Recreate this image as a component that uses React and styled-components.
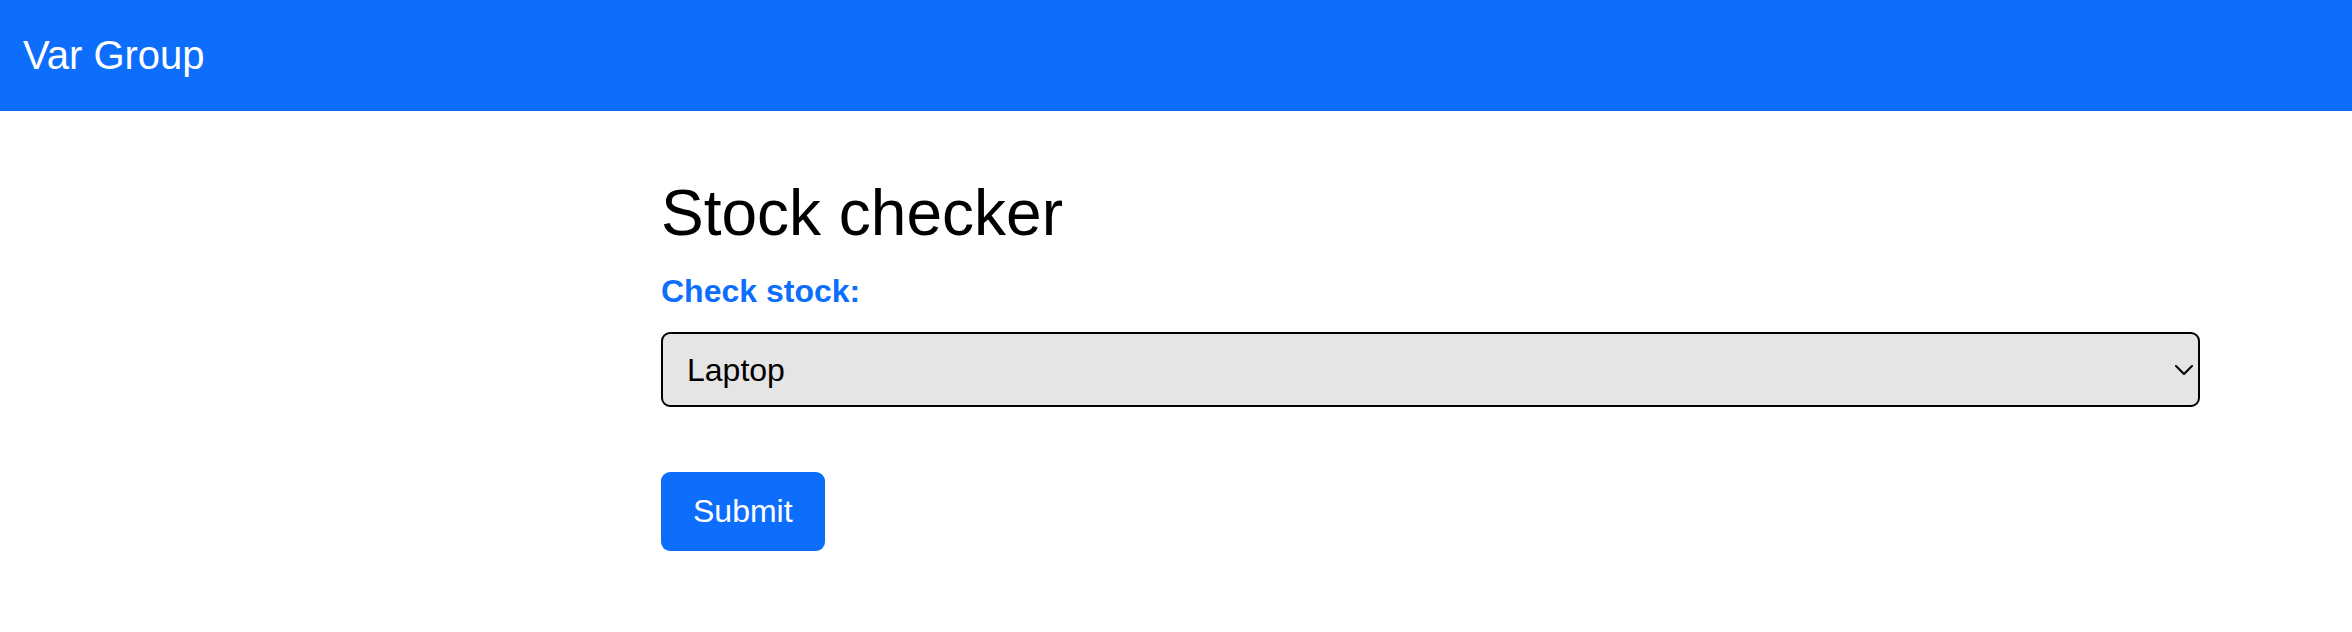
import React from "react";
import styled, { createGlobalStyle } from "styled-components";

const GlobalStyle = createGlobalStyle`
  html, body {
    margin: 0;
    padding: 0;
    background: #ffffff;
    font-family: "Liberation Sans", Arial, sans-serif;
    color: #000000;
  }
  * { box-sizing: border-box; }
`;

const NavBar = styled.header`
  height: 111px;
  background: #0d6efd;
  display: flex;
  align-items: center;
  padding: 0 23px;
`;

const Brand = styled.a`
  color: #ffffff;
  font-size: 40px;
  line-height: normal;
  text-decoration: none;
`;

const Main = styled.main`
  padding: 64px 152px 60px 661px;
  display: flex;
  flex-direction: column;
  align-items: stretch;
`;

const Title = styled.h1`
  margin: 0;
  font-size: 64px;
  font-weight: 400;
  line-height: 77px;
`;

const Form = styled.form`
  display: flex;
  flex-direction: column;
  align-items: flex-start;
  margin-top: 15px;
`;

const Label = styled.label`
  color: #0d6efd;
  font-weight: 700;
  font-size: 32px;
  line-height: 48px;
`;

const SelectWrap = styled.div`
  position: relative;
  width: 100%;
  margin-top: 17px;
`;

const Select = styled.select`
  appearance: none;
  -webkit-appearance: none;
  width: 100%;
  height: 75px;
  border: 2px solid #000000;
  border-radius: 9px;
  background: #e5e5e5;
  color: #000000;
  font-family: "Liberation Sans", Arial, sans-serif;
  font-size: 32px;
  padding: 0 40px 0 24px;
  outline: none;
`;

const Chevron = styled.svg`
  position: absolute;
  right: 7px;
  top: 33px;
  width: 18px;
  height: 10px;
  pointer-events: none;
`;

const SubmitButton = styled.button`
  margin-top: 65px;
  height: 79px;
  padding: 0 32px;
  border: none;
  border-radius: 9px;
  background: #0d6efd;
  color: #ffffff;
  font-family: "Liberation Sans", Arial, sans-serif;
  font-size: 32px;
  cursor: pointer;
`;

export default function App() {
  return (
    <>
      <GlobalStyle />
      <NavBar>
        <Brand href="#">Var Group</Brand>
      </NavBar>
      <Main>
        <Title>Stock checker</Title>
        <Form onSubmit={(e) => e.preventDefault()}>
          <Label htmlFor="product">Check stock:</Label>
          <SelectWrap>
            <Select id="product" defaultValue="Laptop">
              <option>Laptop</option>
              <option>Phone</option>
              <option>Tablet</option>
            </Select>
            <Chevron viewBox="0 0 18 10" fill="none">
              <polyline
                points="1,1 9,9 17,1"
                stroke="#000"
                strokeWidth="2"
                strokeLinecap="round"
                strokeLinejoin="round"
              />
            </Chevron>
          </SelectWrap>
          <SubmitButton type="submit">Submit</SubmitButton>
        </Form>
      </Main>
    </>
  );
}
